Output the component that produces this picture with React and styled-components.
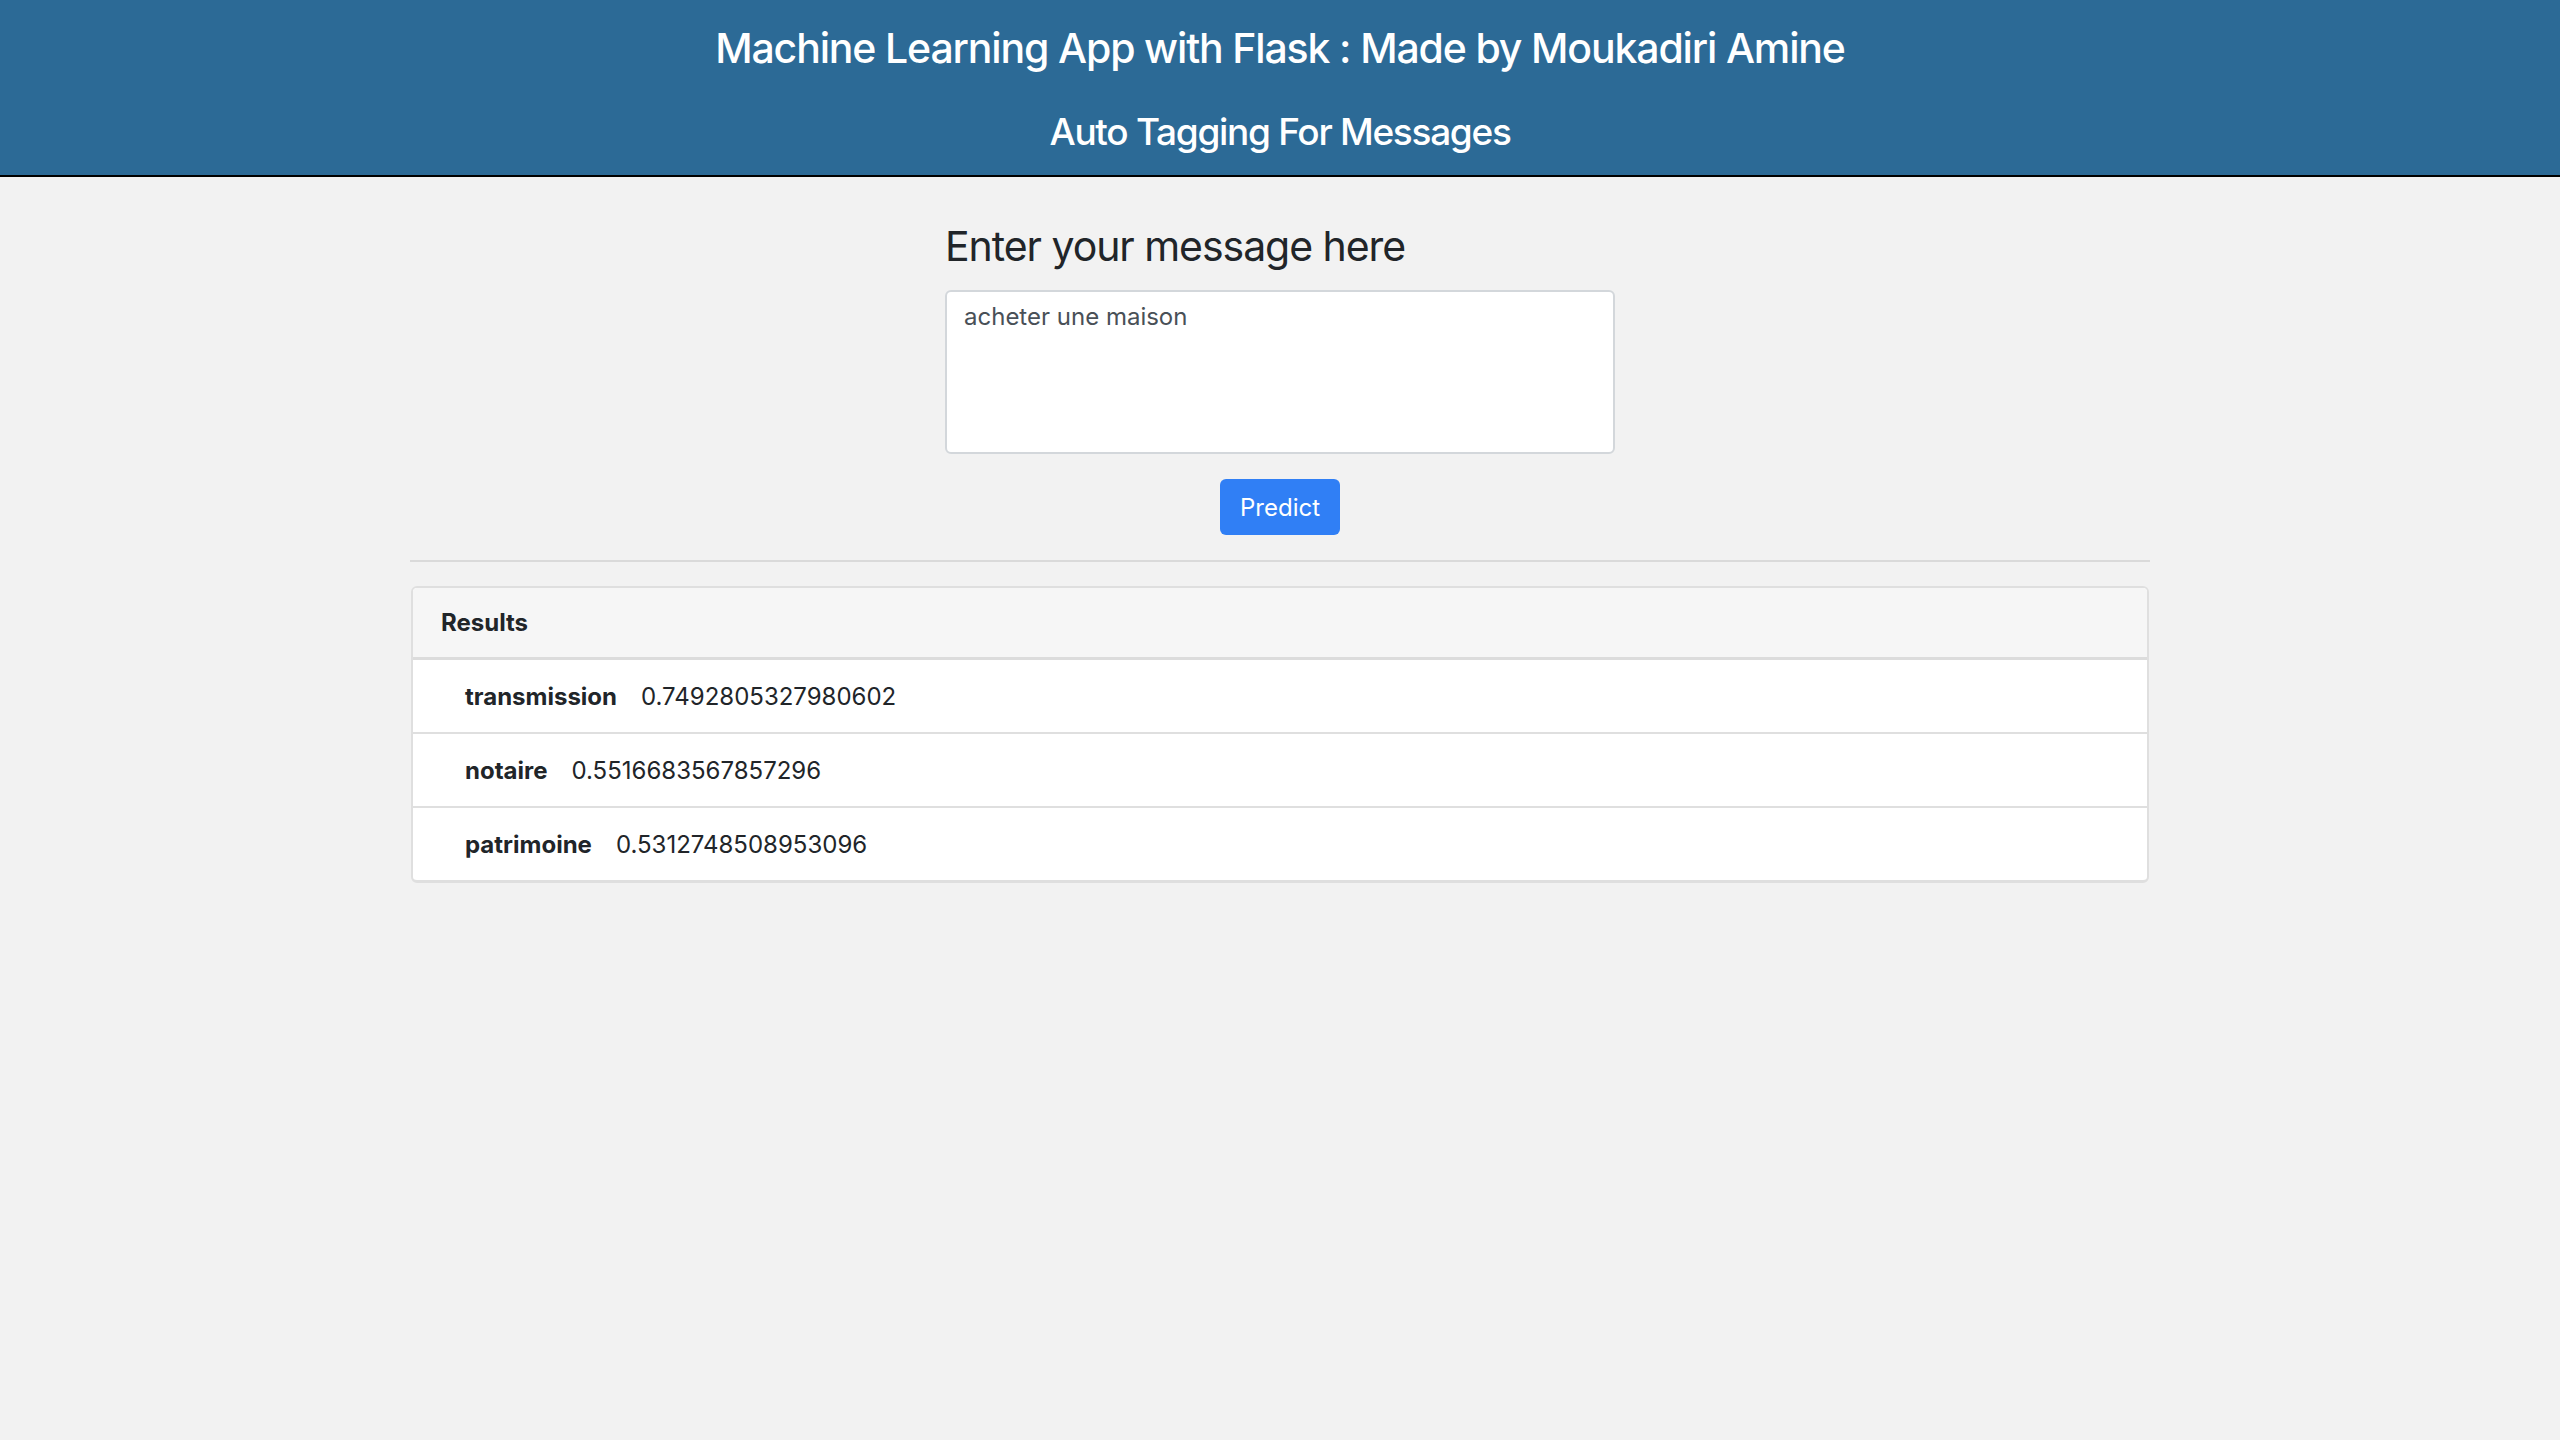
import React from "react";
import styled, { createGlobalStyle } from "styled-components";

const headerBlue = "#2c6a96";
const pageBg = "#f2f2f2";
const textDark = "#212529";
const lineColour = "#dfdfdf";

const GlobalStyle = createGlobalStyle`
    html, body {
        margin: 0;
        padding: 0;
        background: ${pageBg};
        font-family: Inter, "Noto Sans", "Liberation Sans", sans-serif;
        color: ${textDark};
    }
`;

const Header = styled.header`
    background: ${headerBlue};
    border-bottom: 2px solid #000;
    padding: 23px 0 20px;
    text-align: center;
    color: #fff;
`;

const Title = styled.h1`
    margin: 0;
    font-size: 41px;
    line-height: 50px;
    font-weight: 500;
    letter-spacing: -1.15px;
`;

const Subtitle = styled.h2`
    margin: 36px 0 0;
    font-size: 37px;
    line-height: 46px;
    font-weight: 500;
    letter-spacing: -1.3px;
`;

const Main = styled.main`
    display: flex;
    flex-direction: column;
    align-items: center;
`;

const Form = styled.form`
    width: 670px;
    margin-top: 44px;
    display: flex;
    flex-direction: column;
    align-items: center;
`;

const FormLabel = styled.label`
    align-self: stretch;
    font-size: 41px;
    line-height: 50px;
    font-weight: 400;
    letter-spacing: -1.05px;
    margin-bottom: 19px;
`;

const MessageBox = styled.textarea`
    box-sizing: border-box;
    width: 100%;
    height: 164px;
    border: 2px solid #d3d7db;
    border-radius: 6px;
    background: #fff;
    padding: 7px 17px;
    font-family: inherit;
    font-size: 24px;
    line-height: 36px;
    color: #495057;
    resize: none;
    outline: none;
`;

const PredictButton = styled.button`
    margin-top: 25px;
    width: 120px;
    height: 56px;
    border: none;
    border-radius: 6px;
    background: #307ff5;
    color: #fff;
    font-family: inherit;
    font-size: 24px;
    cursor: pointer;
`;

const Container = styled.div`
    width: 1740px;
`;

const Divider = styled.hr`
    margin: 25px 0 24px;
    border: none;
    border-top: 2px solid #dadada;
`;

const Card = styled.section`
    margin: 0 1px;
    border: 2px solid ${lineColour};
    border-bottom-width: 3px;
    border-radius: 6px;
    overflow: hidden;
    background: #fff;
`;

const CardHeader = styled.div`
    height: 69px;
    display: flex;
    align-items: center;
    padding: 0 28px;
    background: #f6f6f6;
    border-bottom: 3px solid #dcdcdc;
    font-size: 24px;
    font-weight: 700;
`;

const ResultList = styled.ul`
    list-style: none;
    margin: 0;
    padding: 0;
`;

const ResultRow = styled.li`
    height: 72px;
    display: flex;
    align-items: center;
    gap: 24px;
    padding: 0 52px;
    font-size: 24px;
    border-top: ${(props) => (props.first ? "none" : `2px solid ${lineColour}`)};
`;

const Tag = styled.strong`
    font-weight: 700;
`;

const Score = styled.span`
    font-weight: 400;
`;

const results = [
    { tag: "transmission", score: "0.7492805327980602" },
    { tag: "notaire", score: "0.5516683567857296" },
    { tag: "patrimoine", score: "0.5312748508953096" },
];

const App = () => (
    <>
        <GlobalStyle />
        <Header>
            <Title>Machine Learning App with Flask : Made by Moukadiri Amine</Title>
            <Subtitle>Auto Tagging For Messages</Subtitle>
        </Header>
        <Main>
            <Form onSubmit={(e) => e.preventDefault()}>
                <FormLabel htmlFor="message">Enter your message here</FormLabel>
                <MessageBox id="message" defaultValue="acheter une maison" />
                <PredictButton type="submit">Predict</PredictButton>
            </Form>
            <Container>
                <Divider />
                <Card>
                    <CardHeader>Results</CardHeader>
                    <ResultList>
                        {results.map((r, i) => (
                            <ResultRow key={r.tag} first={i === 0}>
                                <Tag>{r.tag}</Tag>
                                <Score>{r.score}</Score>
                            </ResultRow>
                        ))}
                    </ResultList>
                </Card>
            </Container>
        </Main>
    </>
);

export default App;
